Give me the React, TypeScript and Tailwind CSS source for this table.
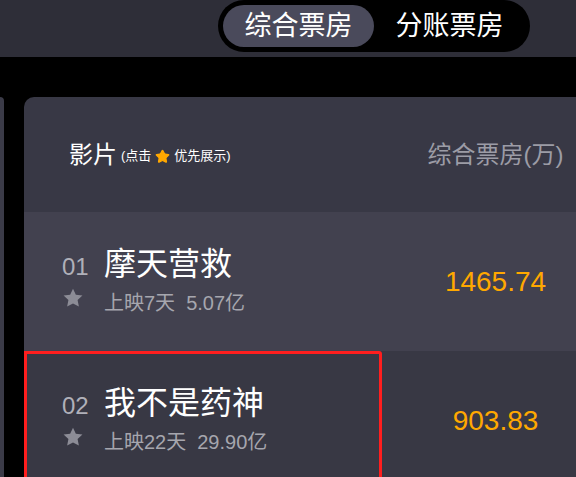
import { Star } from 'lucide-react';

interface Movie {
  rank: string;
  name: string;
  days: string;
  total: string;
  boxOffice: string;
  highlighted?: boolean;
}

const movies: Movie[] = [
  { rank: '01', name: '摩天营救', days: '上映7天', total: '5.07亿', boxOffice: '1465.74' },
  { rank: '02', name: '我不是药神', days: '上映22天', total: '29.90亿', boxOffice: '903.83', highlighted: true },
];

const font = { fontFamily: '"Liberation Sans", "Noto Sans CJK SC", sans-serif' };

function StarIcon({ className }: { className: string }) {
  return (
    <svg viewBox="0 0 24 24" className={className}>
      <path
        fill="currentColor"
        d="M12 1.8l3.1 6.6 7.2.9-5.3 5 1.4 7.1L12 17.9l-6.4 3.5 1.4-7.1-5.3-5 7.2-.9z"
      />
    </svg>
  );
}

export default function App() {
  return (
    <div className="w-[576px] h-[477px] overflow-hidden bg-black text-white" style={font}>
      {/* Top bar */}
      <div className="h-[57px] bg-[#2e2e38] flex justify-end items-start pr-[46px]">
        <div className="h-[52px] p-[5px] rounded-full bg-black flex">
          <div className="w-[151px] h-[42px] rounded-full bg-[#4a4a5b] text-[27px] leading-[42px] text-center">
            综合票房
          </div>
          <div className="w-[151px] h-[42px] rounded-full text-[27px] leading-[42px] text-center">
            分账票房
          </div>
        </div>
      </div>

      {/* Content */}
      <div className="flex gap-[20px] mt-[40px]">
        <div className="w-[4px] h-[400px] bg-[#3b3b48] rounded-tr-[8px] shrink-0" />
        <div className="w-[585px] shrink-0 rounded-tl-[10px] overflow-hidden">
          {/* Header */}
          <div className="h-[115px] bg-[#383845] flex">
            <div className="w-[358px] pl-[45px] flex items-center">
              <span className="text-[24px]">影片</span>
              <span className="text-[13px] ml-[4px] mt-[3px] flex items-center">
                (点击
                <Star size={15} className="mx-[4px] text-[#ffa800] fill-[#ffa800]" />
                优先展示)
              </span>
            </div>
            <div className="flex-1 flex items-center justify-center text-[24px] text-[#9c9ca6]">
              综合票房(万)
            </div>
          </div>

          {/* Rows */}
          {movies.map((m, i) => (
            <div
              key={m.rank}
              className={`h-[139px] flex ${i % 2 === 0 ? 'bg-[#42414f]' : 'bg-[#383844]'}`}
            >
              <div
                className={`w-[358px] pl-[38px] pb-[4px] flex items-center ${
                  m.highlighted ? 'ring-[3px] ring-inset ring-[#ff1e1e] rounded-tr-[3px]' : ''
                }`}
              >
                <div className="flex flex-col">
                  <div className="flex items-baseline">
                    <span className="w-[42px] text-[24px] text-[#b0b0b9]">{m.rank}</span>
                    <span className="text-[32px] leading-[38px]">{m.name}</span>
                  </div>
                  <div className="flex items-center mt-[6px]">
                    <span className="w-[42px] -mt-[9px]">
                      <StarIcon className="w-[22px] h-[22px] text-[#8c8c96]" />
                    </span>
                    <span className="text-[20px] leading-[24px] text-[#a6a6ae]">
                      {m.days}
                      <span className="ml-[11px]">{m.total}</span>
                    </span>
                  </div>
                </div>
              </div>
              <div className="flex-1 flex items-center justify-center text-[28px] text-[#ffa800]">
                {m.boxOffice}
              </div>
            </div>
          ))}
        </div>
      </div>
    </div>
  );
}
